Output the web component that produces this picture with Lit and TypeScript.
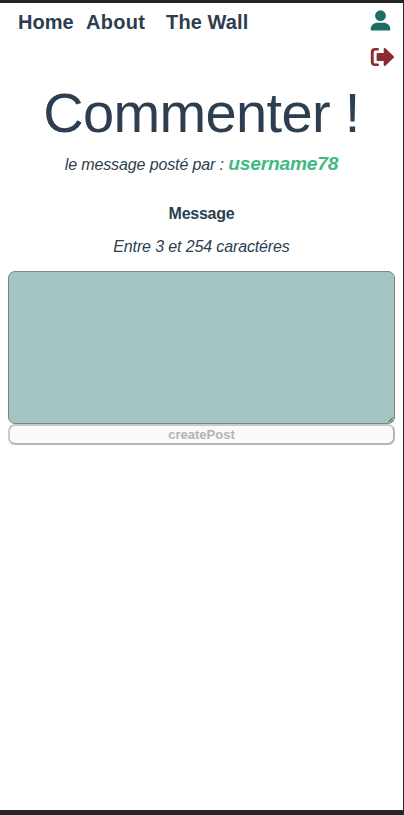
import { LitElement, html, css } from "lit";
import { customElement } from "lit/decorators.js";

@customElement("app-root")
export class AppRoot extends LitElement {
  static styles = css`
    :host {
      display: block;
      box-sizing: border-box;
      height: 815px;
      overflow: hidden;
      background: #fff;
      border-top: 3px solid #272727;
      border-right: 1px solid #272727;
      border-bottom: 5px solid #292628;
      color: #2c3e50;
      font-family: "Liberation Sans", Arial, sans-serif;
      font-size: 16px;
    }
    .header { display: flex; justify-content: space-between; height: 69px; }
    .links { display: flex; padding: 7px 0 0 18px; font-weight: bold; font-size: 20px; line-height: 24px; }
    .link { color: inherit; text-decoration: none; white-space: nowrap; }
    .about { margin-left: 12.5px; letter-spacing: 0.25px; }
    .wall { margin-left: 21px; letter-spacing: 0.1px; }
    .actions { display: flex; flex-direction: column; padding: 7px 9px 0 0; }
    .icon { display: block; }
    .logout { margin-top: 16px; }
    .content { display: flex; flex-direction: column; align-items: center; padding: 0 8px; text-align: center; }
    .title { margin: 9px 0 0; font-size: 56px; font-weight: normal; line-height: 64px; letter-spacing: -0.65px; white-space: nowrap; }
    .by { margin: 7px 0 0; line-height: 24px; font-style: italic; letter-spacing: -0.12px; white-space: nowrap; }
    .user { color: #42b983; font-size: 19.2px; font-weight: bold; letter-spacing: -0.2px; }
    .label { margin-top: 27px; font-weight: bold; line-height: 20px; letter-spacing: -0.25px; }
    .hint { margin: 13px 0 0; font-style: italic; line-height: 20px; letter-spacing: -0.13px; }
    .field { position: relative; width: 100%; margin-top: 14px; }
    .text {
      display: block; box-sizing: border-box; width: 100%; height: 153px;
      margin: 0; border: 1px solid #7c8483; border-radius: 7px;
      background: #a4c4c2; resize: none; outline: none;
    }
    .grip { position: absolute; right: 1px; bottom: 1px; }
    .send {
      box-sizing: border-box; width: 100%; height: 21px; padding: 0 0 1px;
      border: 2px solid; border-color: #c9c9c9 #b6b6b6 #b6b6b6 #c9c9c9;
      border-radius: 7px; background: #fafafa;
      color: #b3b3b3; font: bold 13px/15px "Liberation Sans", Arial, sans-serif;
    }
  `;

  render() {
    return html`
      <header class="header">
        <nav class="links">
          <a class="link">Home</a>
          <a class="link about">About</a>
          <a class="link wall">The Wall</a>
        </nav>
        <div class="actions">
          <svg class="icon" width="24" height="21" viewBox="0 0 24 21" fill="#1a6e62">
            <circle cx="10.5" cy="5.7" r="5.4" />
            <path d="M.7 19.2C.7 15.2 3.7 12.7 7.8 12.7h5.4c4.1 0 7.1 2.5 7.1 6.5q0 1.3-1.3 1.3H2Q.7 20.500.7 19.2Z" />
          </svg>
          <svg class="icon logout" width="24" height="20" viewBox="0 0 24 20" fill="#8a2c32">
            <path d="M7.8 1H5Q.8 1 .8 5v10q0 4 4.200 4h2.800q1.200 0 1.200-1.300T7.800 16.400H5.200q-1.500 0-1.500-1.500V5.100q0-1.500 1.500-1.500h2.600Q9 3.600 9 2.300T7.800 1Z" />
            <path d="M23.700 9.300 15.700 1.500Q14 .2 13.700 2V6H8Q6.600 6 6.600 7.300v5.400Q6.600 14 8 14h5.700v4q.3 1.800 2 .5l8-7.800q.7-.7 0-1.400Z" />
          </svg>
        </div>
      </header>
      <main class="content">
        <h1 class="title">Commenter !</h1>
        <p class="by">le message posté par : <span class="user">username78</span></p>
        <label class="label" for="message">Message</label>
        <p class="hint">Entre 3 et 254 caractéres</p>
        <div class="field">
          <textarea class="text" id="message"></textarea>
          <svg class="grip" width="6" height="6" viewBox="0 0 6 6" stroke="#35403f" stroke-width="1">
            <path d="M.5 5 5 .5M3.500 5 5 3.500" />
          </svg>
        </div>
        <button class="send" disabled>createPost</button>
      </main>
    `;
  }
}
